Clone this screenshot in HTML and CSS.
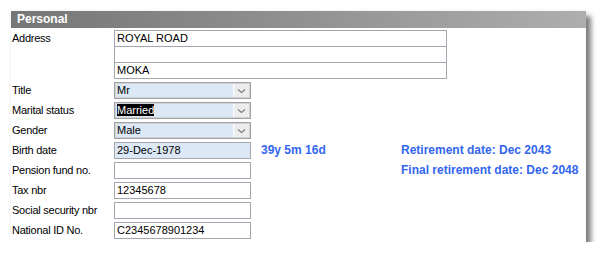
FILE: index.html
```html
<!DOCTYPE html>
<html>
<head>
<meta charset="utf-8">
<link rel="stylesheet" href="styles.css">
</head>
<body>
<div class="panel">
  <div class="header">Personal</div>
  <div class="form">
    <div class="label label-top">Address</div>
    <div class="address">
      <div class="field">ROYAL ROAD</div>
      <div class="field"></div>
      <div class="field">MOKA</div>
    </div>

    <div class="label">Title</div>
    <div class="combo"><span class="value">Mr</span><span class="drop"><svg width="9" height="6" viewBox="0 0 9 6"><path d="M1 1.5 L4.5 4.5 L8 1.5" fill="none" stroke="#7a7a7a" stroke-width="1.1"/></svg></span></div>
    <div class="rest"></div>

    <div class="label">Marital status</div>
    <div class="combo"><span class="value"><span class="sel">Married</span></span><span class="drop"><svg width="9" height="6" viewBox="0 0 9 6"><path d="M1 1.5 L4.5 4.5 L8 1.5" fill="none" stroke="#7a7a7a" stroke-width="1.1"/></svg></span></div>
    <div class="rest"></div>

    <div class="label">Gender</div>
    <div class="combo"><span class="value">Male</span><span class="drop"><svg width="9" height="6" viewBox="0 0 9 6"><path d="M1 1.5 L4.5 4.5 L8 1.5" fill="none" stroke="#7a7a7a" stroke-width="1.1"/></svg></span></div>
    <div class="rest"></div>

    <div class="label">Birth date</div>
    <div class="field field-blue">29-Dec-1978</div>
    <div class="info info-age">39y 5m 16d</div>
    <div class="info">Retirement date: Dec 2043</div>

    <div class="label">Pension fund no.</div>
    <div class="field"></div>
    <div class="info"></div>
    <div class="info">Final retirement date: Dec 2048</div>

    <div class="label">Tax nbr</div>
    <div class="field">12345678</div>
    <div class="rest"></div>

    <div class="label">Social security nbr</div>
    <div class="field"></div>
    <div class="rest"></div>

    <div class="label">National ID No.</div>
    <div class="field">C2345678901234</div>
    <div class="rest"></div>
  </div>
</div>
</body>
</html>
```
FILE: styles.css
```css
html, body {
  margin: 0;
  padding: 0;
  background: #ffffff;
}

body {
  font-family: "Liberation Sans", Arial, sans-serif;
  font-size: 11px;
  color: #000;
}

.panel {
  margin: 11px 0 0 11px;
  width: 575px;
  height: 231px;
  background: #ffffff;
  box-shadow: 5px 5px 5px rgba(0, 0, 0, 0.5), 0 0 4px rgba(0, 0, 0, 0.06);
}

.header {
  height: 17px;
  line-height: 17px;
  padding-left: 6px;
  background: linear-gradient(to right, #767676, #8e8e8e 45%, #aeaeae);
  color: #ffffff;
  font-weight: bold;
  font-size: 12px;
}

.form {
  display: grid;
  grid-template-columns: 103px 137px 150px 1fr;
  row-gap: 3px;
  padding-top: 2px;
}

.label {
  padding-left: 1px;
  height: 17px;
  line-height: 17px;
  white-space: nowrap;
  letter-spacing: -0.25px;
}

.label-top {
  align-self: start;
}

.address {
  grid-column: 2 / 5;
  width: 333px;
  display: flex;
  flex-direction: column;
}

.address .field + .field {
  margin-top: -1px;
}

.field {
  box-sizing: border-box;
  height: 17px;
  line-height: 15px;
  border: 1px solid #a5a5ad;
  padding-left: 2px;
  background: #ffffff;
  white-space: nowrap;
}

.field-blue {
  background: #dce8f5;
}

.combo {
  box-sizing: border-box;
  height: 17px;
  border: 1px solid #a2a2a2;
  box-shadow: inset 0 0 0 1px #d0d4d8;
  background: #dce8f5;
  display: flex;
}

.combo .value {
  flex: 1;
  line-height: 15px;
  padding-left: 2px;
  white-space: nowrap;
  overflow: hidden;
}

.sel {
  background: #000;
  color: #fff;
  display: inline-block;
  line-height: 12px;
}

.combo .drop {
  width: 15px;
  margin: 1px 1px 1px 0;
  background: #ededed;
  border-left: 1px solid #ffffff;
  display: flex;
  align-items: center;
  justify-content: center;
}

.rest {
  grid-column: 3 / 5;
}

.info {
  height: 17px;
  line-height: 17px;
  color: #3366ee;
  font-weight: bold;
  font-size: 12px;
  white-space: nowrap;
}

.info-age {
  padding-left: 10px;
}
```
